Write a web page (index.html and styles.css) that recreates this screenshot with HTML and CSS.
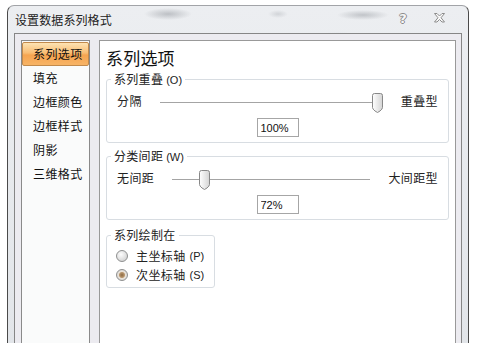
FILE: index.html
```html
<!DOCTYPE html>
<html lang="zh-CN">
<head>
    <meta charset="UTF-8">
    <meta name="viewport" content="width=device-width, initial-scale=1.0">
    <title>设置数据系列格式</title>
    <link rel="stylesheet" href="styles.css">
</head>
<body>
    <div class="dialog">
        <div class="title-bar">
            <span class="title">设置数据系列格式</span>
            <span class="help">?</span>
            <span class="close">
                <svg width="11" height="10" viewBox="0 0 11 10">
                    <polygon points="0.5,0.5 3,0.5 5.5,3 8,0.5 10.5,0.5 7,4.75 10.5,9 8,9 5.5,6.5 3,9 0.5,9 4,4.75" fill="#fafafa" stroke="#8c8c8c" stroke-width="1" stroke-linejoin="round"/>
                </svg>
            </span>
        </div>

        <div class="client">
            <ul class="nav">
                <li class="nav-item active">系列选项</li>
                <li class="nav-item">填充</li>
                <li class="nav-item">边框颜色</li>
                <li class="nav-item">边框样式</li>
                <li class="nav-item">阴影</li>
                <li class="nav-item">三维格式</li>
            </ul>

            <div class="panel">
                <h2 class="panel-title">系列选项</h2>

                <fieldset class="group">
                    <legend>系列重叠 <span class="key">(O)</span></legend>
                    <div class="slider-row">
                        <span class="slider-label">分隔</span>
                        <div class="slider">
                            <span class="thumb" style="--pos: 1"></span>
                        </div>
                        <span class="slider-label">重叠型</span>
                    </div>
                    <div class="value-row">
                        <input class="value" type="text" value="100%">
                    </div>
                </fieldset>

                <fieldset class="group">
                    <legend>分类间距 <span class="key">(W)</span></legend>
                    <div class="slider-row">
                        <span class="slider-label">无间距</span>
                        <div class="slider">
                            <span class="thumb" style="--pos: 0.144"></span>
                        </div>
                        <span class="slider-label">大间距型</span>
                    </div>
                    <div class="value-row">
                        <input class="value" type="text" value="72%">
                    </div>
                </fieldset>

                <fieldset class="group group-axis">
                    <legend>系列绘制在</legend>
                    <label class="radio-row">
                        <span class="radio"></span>
                        主坐标轴 <span class="key">(P)</span>
                    </label>
                    <label class="radio-row">
                        <span class="radio checked"></span>
                        次坐标轴 <span class="key">(S)</span>
                    </label>
                </fieldset>
            </div>
        </div>
    </div>
</body>
</html>
```

FILE: styles.css
```css
* {
    box-sizing: border-box;
}

body {
    margin: 0;
    height: 343px;
    overflow: hidden;
    background: #fff;
    font-family: "Noto Sans CJK SC", "Noto Sans", sans-serif;
    font-size: 12px;
    color: #222;
}

.dialog {
    margin: 5px 0 0 7px;
    width: 462px;
    height: 338px;
    display: flex;
    flex-direction: column;
    border: 1px solid #4a4a4a;
    border-bottom: none;
    border-top-color: #a2a4a8;
    border-radius: 7px 7px 0 0;
    background:
        radial-gradient(ellipse 24px 6px at 160px 8px, rgba(150, 154, 160, 0.55), transparent),
        radial-gradient(ellipse 26px 5px at 355px 9px, rgba(150, 154, 160, 0.5), transparent),
        radial-gradient(ellipse 10px 4px at 270px 8px, rgba(170, 174, 180, 0.4), transparent),
        radial-gradient(ellipse 22px 4px at 140px 30px, rgba(170, 180, 200, 0.35), transparent),
        radial-gradient(ellipse 22px 4px at 330px 30px, rgba(170, 180, 200, 0.35), transparent),
        linear-gradient(#eceef1, #e2e5e9);
}

/* title bar */
.title-bar {
    height: 27px;
    flex: none;
    display: flex;
    align-items: center;
    padding: 0 16px 0 7px;
}

.title {
    flex: 1;
    letter-spacing: 0.1px;
    line-height: 14px;
    padding-top: 1px;
}

.help {
    width: 26px;
    text-align: center;
    font-family: "DejaVu Sans", sans-serif;
    font-size: 13px;
    font-weight: bold;
    line-height: 14px;
    color: #f6f6f6;
    text-shadow: 1px 0 #8c8c8c, -1px 0 #8c8c8c, 0 1px #8c8c8c, 0 -1px #8c8c8c;
    margin-top: -2px;
}

.close {
    width: 26px;
    display: flex;
    justify-content: center;
    margin-top: -3px;
    margin-left: 10px;
}

/* client area */
.client {
    flex: 1;
    margin: 0 6px;
    border: 1px solid #868686;
    border-bottom: none;
    background: #ecebf0;
    display: flex;
    padding: 6px 5px 0 6px;
    gap: 9px;
}

.nav {
    list-style: none;
    margin: 0;
    width: 69px;
    padding: 1px 0 0;
    border: 1px solid #8a8a8a;
    border-bottom: none;
    background: #fafbfb;
}

.nav-item {
    height: 24px;
    line-height: 22px;
    padding-left: 10px;
    border: 1px solid transparent;
    letter-spacing: 0.4px;
    color: #111;
}

.nav-item.active {
    border-color: #c28a4c;
    border-radius: 2px;
    background: linear-gradient(#fde3b3, #f9bd74 45%, #f6a450 55%, #f7b466);
}

.panel {
    flex: 1;
    border: 1px solid #999;
    border-bottom: none;
    background: #fff;
}

.panel-title {
    margin: 6px 0 4px;
    padding-left: 6px;
    font-size: 17px;
    font-weight: normal;
    line-height: 21px;
    letter-spacing: 0.2px;
    color: #111;
}

/* group boxes */
.group {
    margin: 0 6px;
    padding: 3px 10px 5px 10px;
    border: 1px solid #d8dde2;
    border-radius: 3px;
}

.group + .group {
    margin-top: 6px;
}

.group legend {
    margin-left: -6px;
    padding: 0 3px;
    line-height: 14px;
    letter-spacing: 0.3px;
}

.key {
    font-family: "Liberation Sans", sans-serif;
    font-size: 11px;
    letter-spacing: 0;
}

.slider-row {
    height: 22px;
    display: flex;
    align-items: center;
    gap: 18px;
}

.slider-label {
    letter-spacing: 0.4px;
    line-height: 14px;
}

.slider {
    flex: 1;
    height: 1px;
    background: #a4a4a4;
    position: relative;
    margin-top: 3px;
}

.thumb {
    position: absolute;
    top: -9px;
    left: calc((100% - 11px) * var(--pos));
    width: 11px;
    height: 20px;
    background: url("data:image/svg+xml;utf8,<svg xmlns='http://www.w3.org/2000/svg' width='11' height='20'><defs><linearGradient id='g' x1='0' x2='1'><stop offset='0' stop-color='%23ffffff'/><stop offset='1' stop-color='%23d4d4d4'/></linearGradient></defs><path d='M0.5 2.5 Q0.5 0.5 2.5 0.5 H8.5 Q10.5 0.5 10.5 2.5 V14.5 Q10.5 16 8 18 L5.5 19.5 L3 18 Q0.5 16 0.5 14.5 Z' fill='url(%23g)' stroke='%23888888'/></svg>") no-repeat;
}

.value-row {
    margin-top: 6px;
    display: flex;
    justify-content: center;
}

.value {
    width: 42px;
    height: 19px;
    border: 1px solid #a6a6a6;
    padding: 0 3px;
    font-family: "Liberation Sans", sans-serif;
    font-size: 11px;
    color: #111;
    outline: none;
}

/* radio group */
.group-axis {
    width: 109px;
    margin-top: 8px !important;
    padding: 4px 6px 3px 9px;
}

.group-axis legend {
    margin-left: -5px;
}

.radio-row {
    height: 19px;
    display: flex;
    align-items: center;
    gap: 8px;
    letter-spacing: 0.4px;
    line-height: 14px;
}

.radio-row .key {
    margin-left: -4px;
}

.radio {
    width: 12px;
    height: 12px;
    border-radius: 50%;
    border: 1px solid #8e8f8f;
    background: radial-gradient(circle at 40% 35%, #fdfdfd, #d8d8d8 70%);
}

.radio.checked {
    background: radial-gradient(circle, #8c6a43 0, #b8956c 2.5px, #e9e2d8 3.5px, #d6d6d6 6px);
}
```
